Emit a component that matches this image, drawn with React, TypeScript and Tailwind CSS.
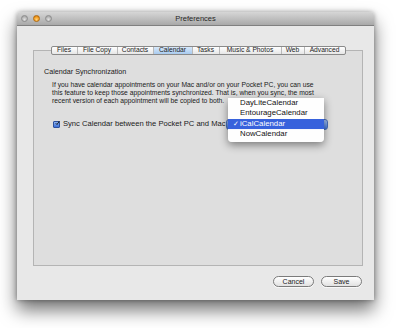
import React from 'react';

const tabs = [
  { name: 'Files', w: 'w-[25px]' },
  { name: 'File Copy', w: 'w-[40px]' },
  { name: 'Contacts', w: 'w-[36px]' },
  { name: 'Calendar', w: 'w-[39px]', active: true },
  { name: 'Tasks', w: 'w-[27px]' },
  { name: 'Music & Photos', w: 'w-[62px]' },
  { name: 'Web', w: 'w-[23px]' },
  { name: 'Advanced', w: 'w-[41px]' },
];

const calendars = ['DayLiteCalendar', 'EntourageCalendar', 'iCalCalendar', 'NowCalendar'];

const Light: React.FC<{ on?: boolean }> = ({ on }) => (
  <span
    className={
      on
        ? 'h-[7px] w-[7px] rounded-full border border-[#b06a10] bg-[radial-gradient(circle_at_50%_70%,#ffd27a,#f39a1c_60%,#c06a08)]'
        : 'h-[7px] w-[7px] rounded-full border border-[#8d8d8d] bg-[radial-gradient(circle_at_50%_70%,#e0e0e0,#b4b4b4_60%,#9a9a9a)]'
    }
  />
);

const PushButton: React.FC<{ label: string }> = ({ label }) => (
  <button className="flex h-[11px] w-[41px] items-center justify-center rounded-full border border-[#7b7b7b] bg-gradient-to-b from-white to-[#e2e2e2] text-[7px] leading-none text-[#1a1a1a] shadow-[0_1px_0_rgba(255,255,255,0.7)]">
    {label}
  </button>
);

const App: React.FC = () => {
  return (
    <div className="h-[328px] w-[400px] overflow-hidden bg-white pl-[17px] pt-[12px] font-['Lucida_Grande','Liberation_Sans',sans-serif]">
      <div className="flex h-[288px] w-[357px] flex-col overflow-hidden rounded-t-[4px] bg-[#e8e8e8] shadow-[0_10px_18px_rgba(0,0,0,0.55),0_0_5px_rgba(0,0,0,0.35)]">
        {/* title bar */}
        <div className="relative flex h-[14px] items-center border-b border-[#808080] bg-gradient-to-b from-[#d6d6d6] to-[#a9a9a9] pl-[4px]">
          <div className="flex gap-[5px]">
            <Light />
            <Light on />
            <Light />
          </div>
          <span className="absolute inset-x-0 text-center text-[7.5px] leading-none text-[#262626]">Preferences</span>
        </div>

        {/* body */}
        <div className="flex flex-1 flex-col pl-[16px] pr-[11px] pt-[20px]">
          <div className="flex flex-col">
            <div className="relative z-10 flex h-[9px] self-center overflow-hidden rounded-[2px] border border-[#8a8a8a] bg-gradient-to-b from-white to-[#e6e6e6] text-[6.7px] leading-none text-[#1c1c1c]">
              {tabs.map((t, i) => (
                <div
                  key={t.name}
                  className={`flex items-center justify-center ${t.w} ${i > 0 ? 'border-l border-[#b9b9b9]' : ''} ${t.active ? 'bg-gradient-to-b from-[#d7e8fa] to-[#a9cbef]' : ''}`}
                >
                  {t.name}
                </div>
              ))}
            </div>

            <div className="relative -mt-[5px] h-[216px] border border-[#b4b4b4] bg-[#dedede] pl-[10px] pt-[16px] text-[#1a1a1a]">
              <div className="text-[7.2px] leading-[10px]">Calendar Synchronization</div>
              <p className="ml-[8px] mt-[4px] text-[6.75px] leading-[8px]">
                If you have calendar appointments on your Mac and/or on your Pocket PC, you can use
                <br />
                this feature to keep those appointments synchronized. That is, when you sync, the most
                <br />
                recent version of each appointment will be copied to both.
              </p>

              <div className="ml-[9px] mt-[14px] flex h-[10px] items-center">
                <span className="flex h-[7px] w-[7px] items-center justify-center rounded-[1px] border border-[#2c4f9c] bg-gradient-to-b from-[#8fb4f2] to-[#3c6fd6]">
                  <svg viewBox="0 0 10 10" className="h-[8px] w-[8px] -translate-y-[1px] translate-x-[1px]">
                    <path d="M1.5 5.5 L4 8 L9 1" fill="none" stroke="#111" strokeWidth="1.8" />
                  </svg>
                </span>
                <span className="ml-[3px] w-[163px] whitespace-nowrap text-[7.6px] leading-none">
                  Sync Calendar between the Pocket PC and Mac
                </span>

                {/* popup button with open menu */}
                <div className="relative h-[11px] w-[102px] rounded-[3px] border border-[#4a6fb8] bg-gradient-to-b from-[#a9c6f5] to-[#3f72d8]">
                  <div className="absolute -top-[22px] left-[1px] z-20 w-[96px] rounded-b-[4px] bg-white/95 pb-[2px] text-[7.8px] leading-none text-[#111] shadow-[0_3px_8px_rgba(0,0,0,0.45)]">
                    {calendars.map((c) => {
                      const sel = c === 'iCalCalendar';
                      return (
                        <div
                          key={c}
                          className={`flex h-[10.5px] items-center ${sel ? 'bg-[#3762dc] text-white' : ''}`}
                        >
                          <span className="w-[12px] pl-[5px] text-[7px]">{sel ? '✓' : ''}</span>
                          <span>{c}</span>
                        </div>
                      );
                    })}
                  </div>
                </div>
              </div>
            </div>
          </div>

          <div className="mr-[1px] mt-[10px] flex justify-end gap-[7px]">
            <PushButton label="Cancel" />
            <PushButton label="Save" />
          </div>
        </div>
      </div>
    </div>
  );
};

export default App;
